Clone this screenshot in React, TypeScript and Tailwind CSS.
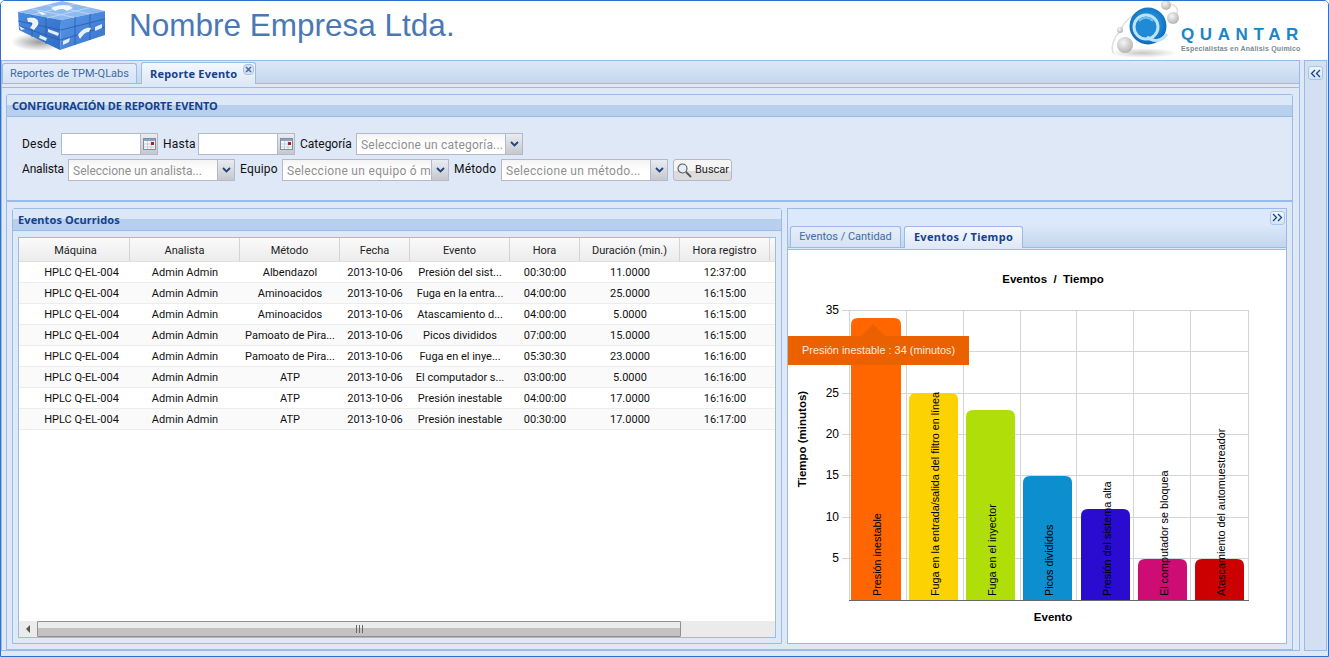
import React from "react";

const font = "font-['Roboto','Noto_Sans',sans-serif]";
const bold = "font-['Noto_Sans',sans-serif] font-bold";

const columns = [
  { name: "Máquina", w: "w-[111px]" },
  { name: "Analista", w: "w-[110px]" },
  { name: "Método", w: "w-[100px]" },
  { name: "Fecha", w: "w-[70px]" },
  { name: "Evento", w: "w-[100px]" },
  { name: "Hora", w: "w-[70px]" },
  { name: "Duración (min.)", w: "w-[100px]" },
  { name: "Hora registro", w: "w-[90px]" },
];

const rows = [
  ["HPLC Q-EL-004", "Admin Admin", "Albendazol", "2013-10-06", "Presión del sist...", "00:30:00", "11.0000", "12:37:00"],
  ["HPLC Q-EL-004", "Admin Admin", "Aminoacidos", "2013-10-06", "Fuga en la entra...", "04:00:00", "25.0000", "16:15:00"],
  ["HPLC Q-EL-004", "Admin Admin", "Aminoacidos", "2013-10-06", "Atascamiento d...", "04:00:00", "5.0000", "16:15:00"],
  ["HPLC Q-EL-004", "Admin Admin", "Pamoato de Pira...", "2013-10-06", "Picos divididos", "07:00:00", "15.0000", "16:15:00"],
  ["HPLC Q-EL-004", "Admin Admin", "Pamoato de Pira...", "2013-10-06", "Fuga en el inye...", "05:30:30", "23.0000", "16:16:00"],
  ["HPLC Q-EL-004", "Admin Admin", "ATP", "2013-10-06", "El computador s...", "03:00:00", "5.0000", "16:16:00"],
  ["HPLC Q-EL-004", "Admin Admin", "ATP", "2013-10-06", "Presión inestable", "04:00:00", "17.0000", "16:16:00"],
  ["HPLC Q-EL-004", "Admin Admin", "ATP", "2013-10-06", "Presión inestable", "00:30:00", "17.0000", "16:17:00"],
];

const bars = [
  { x: 63, top: 68, w: 50, color: "#ff6600", label: "Presión inestable" },
  { x: 121, top: 143, w: 49, color: "#fcd202", label: "Fuga en la entrada/salida del filtro en línea" },
  { x: 178, top: 160, w: 49, color: "#b0de09", label: "Fuga en el inyector" },
  { x: 235, top: 226, w: 49, color: "#0d8ecf", label: "Picos divididos" },
  { x: 293, top: 259, w: 49, color: "#2a0cd0", label: "Presión del sistema alta" },
  { x: 350, top: 309, w: 49, color: "#cd0d74", label: "El computador se bloquea" },
  { x: 407, top: 309, w: 49, color: "#cc0000", label: "Atascamiento del automuestreador" },
];

function LeftLogo() {
  return (
    <svg width="100" height="56" viewBox="0 0 100 56" className="shrink-0">
      <defs>
        <linearGradient id="lf" x1="0" y1="0" x2="1" y2="1">
          <stop offset="0" stopColor="#4a8ae0" />
          <stop offset="1" stopColor="#2f6cc4" />
        </linearGradient>
        <linearGradient id="rf" x1="0" y1="0" x2="1" y2="1">
          <stop offset="0" stopColor="#5a98e8" />
          <stop offset="1" stopColor="#3474cc" />
        </linearGradient>
        <radialGradient id="sh">
          <stop offset="0" stopColor="#666" stopOpacity="0.65" />
          <stop offset="1" stopColor="#666" stopOpacity="0" />
        </radialGradient>
      </defs>
      <ellipse cx="30" cy="41" rx="28" ry="9" fill="url(#sh)" />
      <polygon points="9,11 53,0 96,10 52,19" fill="#8dbaf0" />
      <polygon points="9,11 52,19 51,49 10,29" fill="url(#lf)" />
      <polygon points="52,19 96,10 96,34 51,49" fill="url(#rf)" />
      <path d="M23,8 L66,16.5 M38,4 L81,13 M23,14 L66,3 M38,17 L81,6.5" stroke="#c5daf4" strokeWidth="0.8" />
      <path d="M23,14 L23,36 M37,17 L37,43 M66,16 L66,44 M81,13 L81,39 M9,20 L52,29 L96,18 M10,25 L51,39 L96,26" stroke="#2a5ca8" strokeWidth="0.8" fill="none" />
      <path d="M18,17 C25,15 31,18 29,24 L25,29 L21,27 C24,23 25,21 19,21 Z" fill="#eaf2fc" />
      <path d="M69,34 C73,28 78,26 82,27 L80,31 C76,31 74,34 71,38 Z" fill="#eaf2fc" />
      <path d="M31,34 L38,37 L37,40 L30,37 Z M54,40 L61,37 L60,41 L54,44 Z M39,28 L50,32 L49,35 L39,31 Z M86,26 L93,23 L93,27 L86,30 Z M10,25 L16,28 L12,29 Z" fill="#e3eefa" />
      <path d="M42,7 C50,3 60,3 64,7 L58,10 C54,7 50,8 46,10 Z M28,10 L38,13 L33,14 Z" fill="#f4f8fd" />
    </svg>
  );
}

function QuantarLogo() {
  return (
    <div className="flex items-start shrink-0 w-[194px] h-[58px]">
      <svg width="74" height="58" viewBox="0 0 74 58" className="shrink-0">
        <defs>
          <radialGradient id="qb" cx="0.5" cy="0.45" r="0.6">
            <stop offset="0" stopColor="#3aa6e6" />
            <stop offset="0.6" stopColor="#1a84d0" />
            <stop offset="1" stopColor="#0a62b4" />
          </radialGradient>
          <radialGradient id="gb" cx="0.4" cy="0.35" r="0.7">
            <stop offset="0" stopColor="#f6f6f6" />
            <stop offset="1" stopColor="#b0b0b0" />
          </radialGradient>
          <radialGradient id="gs">
            <stop offset="0" stopColor="#999" stopOpacity="0.55" />
            <stop offset="1" stopColor="#999" stopOpacity="0" />
          </radialGradient>
        </defs>
        <ellipse cx="36" cy="52" rx="34" ry="5" fill="url(#gs)" />
        <path d="M13,30 C18,18 30,10 42,8 M60,3 C72,3 74,12 64,20 M6,52 C4,46 6,38 13,30" stroke="#dedede" strokeWidth="1.5" fill="none" />
        <circle cx="18" cy="44" r="8" fill="url(#gb)" />
        <circle cx="13" cy="29" r="3" fill="url(#gb)" />
        <circle cx="59" cy="4" r="5" fill="url(#gb)" />
        <circle cx="66" cy="17" r="6" fill="url(#gb)" />
        <circle cx="41" cy="25" r="18.5" fill="url(#qb)" />
        <circle cx="39" cy="26" r="12" fill="#1f8ad6" stroke="#bfe3f6" strokeWidth="3" />
        <path d="M40,36 C46,41 54,41 60,33" stroke="#bfe3f6" strokeWidth="3" fill="none" />
        <path d="M32,20 A9,9 0 0 1 46,20" stroke="#6fc0ee" strokeWidth="2" fill="none" />
      </svg>
      <div className="flex flex-col mt-[25px] font-['Liberation_Sans',sans-serif]">
        <div className="text-[17px] leading-[17px] font-bold text-[#1a86c8] tracking-[5.6px] whitespace-nowrap">QUANTAR</div>
        <div className="text-[7px] leading-[9px] mt-[1px] font-bold text-[#7a8a90] tracking-[0.2px] whitespace-nowrap">Especialistas en Análisis Químico</div>
      </div>
    </div>
  );
}

function DoubleChevron({ left }: { left?: boolean }) {
  return (
    <div className="w-[15px] h-[14px] rounded-[3px] border border-[#a9c4ea] bg-gradient-to-b from-[#f0f6fe] to-[#d4e3f6] flex items-center justify-center">
      <svg width="11" height="9" viewBox="0 0 11 9" fill="none" stroke="#15428b" strokeWidth="1.3" className={left ? "rotate-180" : ""}>
        <path d="M1,1 L4.5,4.5 L1,8 M6,1 L9.5,4.5 L6,8" />
      </svg>
    </div>
  );
}

function Trigger() {
  return (
    <div className="w-[17px] h-full shrink-0 border-l border-[#b5b8c8] bg-gradient-to-b from-[#e9ecf1] to-[#c5c8cd] flex items-center justify-center">
      <svg width="9" height="6" viewBox="0 0 9 6" fill="none" stroke="#24437e" strokeWidth="1.8">
        <path d="M1,1 L4.5,4.5 L8,1" />
      </svg>
    </div>
  );
}

function DateField() {
  return (
    <div className="w-[97px] h-[22px] flex border border-[#b5b8c8] bg-white">
      <div className="flex-1" />
      <div className="w-[17px] h-full shrink-0 border-l border-[#b5b8c8] bg-gradient-to-b from-[#e9ecf1] to-[#c5c8cd] flex items-center justify-center">
        <svg width="13" height="12" viewBox="0 0 13 12">
          <rect x="0.5" y="0.5" width="12" height="11" fill="#f6f8fb" stroke="#7e8ca4" />
          <rect x="1" y="1" width="11" height="2" fill="#8fa3c0" />
          <path d="M1,6 H12 M1,9 H12 M4.5,3 V11 M8,3 V11" stroke="#bcc7d8" strokeWidth="0.8" />
          <rect x="8" y="4" width="3" height="3" fill="#c01818" />
        </svg>
      </div>
    </div>
  );
}

function Combo({ text, track }: { text: string; track: string }) {
  return (
    <div className="w-[167px] h-[22px] flex border border-[#b5b8c8] bg-gradient-to-b from-[#f3f3f3] via-white to-white">
      <div className={`flex-1 min-w-0 whitespace-nowrap pl-[4px] text-[12px] leading-[22px] text-[#8f8f8f] ${track}`}>{text}</div>
      <Trigger />
    </div>
  );
}

function Label({ text, className }: { text: string; className: string }) {
  return <div className={`text-[12px] leading-[16px] text-[#111] whitespace-nowrap ${className}`}>{text}</div>;
}

function Chart() {
  const ys = [310, 351, 393, 434, 475, 517, 558].map((y) => y - 250);
  const xs = [849, 906, 963, 1020, 1076, 1133, 1190, 1248].map((x) => x - 788);
  const yLabels: [string, number][] = [["35", 60], ["25", 143], ["20", 184], ["15", 225], ["10", 267], ["5", 308]];
  return (
    <svg width="498" height="394" viewBox="0 0 498 394" className="block font-['Liberation_Sans',sans-serif]">
      {ys.map((y) => (
        <line key={y} x1={61} x2={461} y1={y + 0.5} y2={y + 0.5} stroke="#d4d4d4" />
      ))}
      {xs.map((x) => (
        <line key={x} x1={x + 0.5} x2={x + 0.5} y1={60} y2={350} stroke="#d4d4d4" />
      ))}
      {yLabels.map(([t, y]) => (
        <g key={t}>
          <line x1={54} x2={61} y1={y + 0.5} y2={y + 0.5} stroke="#d4d4d4" />
          <text x={51} y={y + 4} textAnchor="end" fontSize="12" fill="#000">{t}</text>
        </g>
      ))}
      {bars.map((b) => (
        <path
          key={b.label}
          d={`M${b.x},350 V${b.top + 7} Q${b.x},${b.top} ${b.x + 7},${b.top} H${b.x + b.w - 7} Q${b.x + b.w},${b.top} ${b.x + b.w},${b.top + 7} V350 Z`}
          fill={b.color}
        />
      ))}
      <line x1={61} x2={461} y1={350.5} y2={350.5} stroke="#666" />
      {bars.map((b) => (
        <text
          key={b.label + "t"}
          transform={`translate(${b.x + b.w / 2 + 5},346) rotate(-90)`}
          fontSize="10.8"
          fill="#000"
        >
          {b.label}
        </text>
      ))}
      <text x={265} y={33} textAnchor="middle" fontSize="11.5" fontWeight="bold" fill="#000" xmlSpace="preserve">Eventos  /  Tiempo</text>
      <text x={265} y={371} textAnchor="middle" fontSize="11.5" fontWeight="bold" fill="#000">Evento</text>
      <text transform="translate(18,189) rotate(-90)" textAnchor="middle" fontSize="11.5" fontWeight="bold" fill="#000">Tiempo (minutos)</text>
      <polygon points="85,74 72,87 98,87" fill="#eb6100" />
      <rect x={0} y={86} width={181} height={29} fill="#eb6100" />
      <text x={14} y={104} fontSize="10.9" fill="#ffe9dc">Presión inestable : 34 (minutos)</text>
    </svg>
  );
}

function EventsPanel() {
  return (
    <div className="w-[770px] h-full flex flex-col border border-[#99bbe8] rounded-t-[3px] bg-[#dfe8f6]">
      <div className={`h-[22px] shrink-0 bg-gradient-to-b from-[#dce8f8] from-50% to-[#b9cfee] to-50% border-b border-[#99bbe8] pl-[5px] text-[11px] leading-[22px] tracking-[0.1px] text-[#15428b] ${bold}`}>
        Eventos Ocurridos
      </div>
      <div className="flex-1 min-h-0 flex flex-col mx-[5px] mt-[6px] mb-[5px] border border-[#99bbe8] bg-white">
        <div className="flex h-[24px] shrink-0 bg-gradient-to-b from-[#fafafa] to-[#ececec] border-b border-[#e0e0e0]">
          {columns.map((c, j) => (
            <div key={c.name} className={`${c.w} shrink-0 border-r border-[#d4d4d4] text-center text-[11px] leading-[25px] text-[#222] ${j === 0 ? "pl-[3px]" : ""}`}>
              {c.name}
            </div>
          ))}
        </div>
        <div className="flex-1 min-h-0">
          {rows.map((r, i) => (
            <div key={i} className={`flex h-[21px] border-b border-[#ededed] ${i % 2 ? "bg-[#fafafa]" : "bg-white"}`}>
              {r.map((v, j) => (
                <div key={j} className={`${columns[j].w} shrink-0 text-center text-[11px] leading-[18px] pt-[2px] text-[#111] whitespace-nowrap overflow-hidden ${j === 0 ? "pl-[14px]" : ""}`}>
                  {v}
                </div>
              ))}
            </div>
          ))}
        </div>
        <div className="h-[16px] shrink-0 flex bg-[#ebebeb]">
          <div className="w-[18px] flex items-center justify-center">
            <div className="w-0 h-0 border-y-[4px] border-y-transparent border-r-[4px] border-r-[#555]" />
          </div>
          <div className="w-[644px] h-full border border-[#8f8f8f] rounded-[1px] bg-gradient-to-b from-[#ececec] from-45% to-[#c2c2c2] to-45% flex items-center justify-center">
            <div className="w-[7px] h-[8px] flex justify-between">
              <div className="w-px bg-[#666]" />
              <div className="w-px bg-[#666]" />
              <div className="w-px bg-[#666]" />
            </div>
          </div>
        </div>
      </div>
    </div>
  );
}

function ChartPanel() {
  return (
    <div className="w-[500px] h-full ml-[5px] flex flex-col border border-[#99bbe8] bg-[#dce8fb]">
      <div className="h-[16px] shrink-0 flex justify-end items-center pr-[1px] pt-[1px]">
        <DoubleChevron />
      </div>
      <div className="h-[22px] shrink-0 flex items-end pl-[2px] bg-gradient-to-b from-[#dce8fb] to-[#c4d6ed]">
        <div className="h-[21px] w-[111px] border border-b-0 border-[#99bbe8] rounded-t-[3px] bg-gradient-to-b from-[#e6eefa] to-[#d6e3f4] text-center text-[11px] leading-[20px] text-[#416aa3]">
          Eventos / Cantidad
        </div>
        <div className={`h-[22px] w-[119px] ml-[3px] -mb-px relative border border-b-0 border-[#99bbe8] rounded-t-[3px] bg-gradient-to-b from-[#f4f8fe] to-[#dfe8f6] text-center text-[11px] leading-[20px] tracking-[0.3px] text-[#15428b] ${bold}`}>
          Eventos / Tiempo
        </div>
      </div>
      <div className="h-[3px] shrink-0 bg-[#dfe8f6] border-y border-[#99bbe8]" />
      <div className="flex-1 min-h-0 bg-white overflow-hidden">
        <Chart />
      </div>
    </div>
  );
}

export default function App() {
  return (
    <div className={`w-[1329px] h-[657px] flex flex-col overflow-hidden border border-[#2f6fce] rounded-t-[5px] bg-[#dfe8f6] ${font}`}>
      <header className="h-[59px] shrink-0 bg-white flex items-start justify-between overflow-hidden">
        <div className="flex items-start pl-[8px]">
          <LeftLogo />
          <div className="ml-[20px] mt-[5px] text-[31.5px] leading-[38px] text-[#4a78b5] font-['Liberation_Sans',sans-serif] whitespace-nowrap">
            Nombre Empresa Ltda.
          </div>
        </div>
        <div className="pr-[27px]">
          <QuantarLogo />
        </div>
      </header>

      <div className="flex-1 min-h-0 flex pb-[5px]">
        <main className="w-[1300px] h-full flex flex-col border border-[#99bbe8]">
          <div className="h-[23px] shrink-0 flex items-end bg-gradient-to-b from-[#dce8f8] to-[#c4d6ed] border-b border-[#99bbe8]">
            <div className="w-[135px] h-[20px] border border-b-0 border-[#99bbe8] rounded-t-[3px] bg-gradient-to-b from-[#e6eefa] to-[#d6e3f4] text-center text-[11px] leading-[20px] text-[#416aa3]">
              Reportes de TPM-QLabs
            </div>
            <div className={`w-[115px] h-[22px] ml-[4px] -mb-px border border-b-0 border-[#99bbe8] rounded-t-[3px] bg-gradient-to-b from-[#f4f8fe] to-[#dfe8f6] flex items-start pl-[8px] text-[11px] leading-[21px] tracking-[0.2px] text-[#15428b] relative ${bold}`}>
              Reporte Evento
              <div className="absolute right-[1px] top-[1px] w-[11px] h-[11px] rounded-[4px] border border-[#a9c0e0] bg-[#d8e4f4] flex items-center justify-center">
                <svg width="7" height="7" viewBox="0 0 7 7" stroke="#4b6a9c" strokeWidth="1.6">
                  <path d="M1,1 L6,6 M6,1 L1,6" />
                </svg>
              </div>
            </div>
          </div>
          <div className="h-[4px] shrink-0 bg-[#dfe8f6] border-b border-[#99bbe8]" />
          <div className="flex-1 min-h-0 flex flex-col px-[4px] pt-[6px]">
            <section className="h-[106px] shrink-0 w-[1287px] flex flex-col border border-[#99bbe8] border-b-0 rounded-t-[3px] bg-[#dfe8f6]">
              <div className={`h-[22px] shrink-0 bg-gradient-to-b from-[#dce8f8] from-50% to-[#b9cfee] to-50% border-b border-[#99bbe8] pl-[5px] text-[11px] leading-[22px] tracking-[-0.12px] text-[#15428b] ${bold}`}>
                CONFIGURACIÓN DE REPORTE EVENTO
              </div>
              <div className="flex flex-col pl-[15px] pt-[16px] gap-[4px]">
                <div className="flex items-center">
                  <Label text="Desde" className="w-[39px] tracking-[0.2px]" />
                  <DateField />
                  <Label text="Hasta" className="w-[35px] ml-[5px] tracking-[0.2px]" />
                  <DateField />
                  <Label text="Categoría" className="w-[56px] ml-[5px]" />
                  <Combo text="Seleccione un categoría..." track="tracking-[0.2px]" />
                </div>
                <div className="flex items-center">
                  <Label text="Analista" className="w-[46px] -mt-[2px] tracking-[-0.2px]" />
                  <Combo text="Seleccione un analista..." track="tracking-[0px]" />
                  <Label text="Equipo" className="w-[42px] ml-[5px] -mt-[2px] tracking-[0.2px]" />
                  <Combo text="Seleccione un equipo ó m" track="tracking-[0.3px]" />
                  <Label text="Método" className="w-[47px] ml-[5px] -mt-[2px] tracking-[0.2px]" />
                  <Combo text="Seleccione un método..." track="tracking-[0.3px]" />
                  <button className="w-[59px] h-[22px] ml-[5px] border border-[#b5b8c8] rounded-[3px] bg-gradient-to-b from-[#f5f5f5] from-55% to-[#dcdcdc] to-55% flex items-center pl-[2px] text-[11px] text-[#222]">
                    <svg width="16" height="16" viewBox="0 0 16 16" fill="#e8eef6" stroke="#555" strokeWidth="1.1" className="shrink-0">
                      <circle cx="6.5" cy="6.5" r="4.5" />
                      <path d="M10,10 L15,15" strokeWidth="1.8" />
                    </svg>
                    <span className="ml-[3px]">Buscar</span>
                  </button>
                </div>
              </div>
            </section>
            <div className="h-[2px] shrink-0 w-[1287px] bg-[#99bbe8]" />
            <div className="flex-1 min-h-0 w-[1287px] flex flex-row pl-[5px] pt-[6px] pb-[5px] border-x border-b border-[#99bbe8]">
              <EventsPanel />
              <ChartPanel />
            </div>
          </div>
        </main>
        <aside className="w-[23px] h-full ml-[4px] mr-[1px] border border-[#99bbe8] bg-[#d2e0f1] flex justify-center pt-[5px]">
          <DoubleChevron left />
        </aside>
      </div>
    </div>
  );
}
